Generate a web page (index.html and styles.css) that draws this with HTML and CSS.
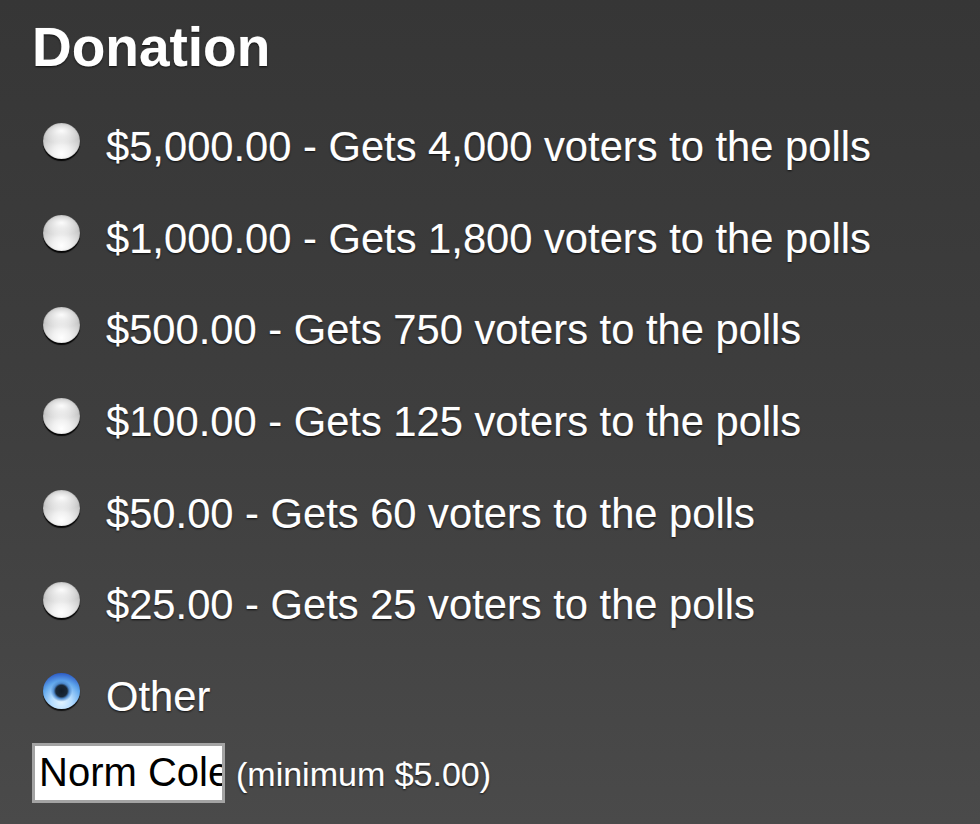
FILE: index.html
```html
<!DOCTYPE html>
<html>
<head>
<meta charset="utf-8">
<link rel="stylesheet" href="styles.css">
</head>
<body>
<form class="donation">
  <h2 class="title">Donation</h2>
  <label class="option"><input type="radio" name="amt" class="radio"><span class="label">$5,000.00 - Gets 4,000 voters to the polls</span></label>
  <label class="option"><input type="radio" name="amt" class="radio"><span class="label">$1,000.00 - Gets 1,800 voters to the polls</span></label>
  <label class="option"><input type="radio" name="amt" class="radio"><span class="label">$500.00 - Gets 750 voters to the polls</span></label>
  <label class="option"><input type="radio" name="amt" class="radio"><span class="label">$100.00 - Gets 125 voters to the polls</span></label>
  <label class="option"><input type="radio" name="amt" class="radio"><span class="label">$50.00 - Gets 60 voters to the polls</span></label>
  <label class="option"><input type="radio" name="amt" class="radio"><span class="label">$25.00 - Gets 25 voters to the polls</span></label>
  <label class="option"><input type="radio" name="amt" class="radio" checked><span class="label">Other</span></label>
  <div class="other-row">
    <input type="text" class="amount" value="Norm Coleman">
    <span class="hint">(minimum $5.00)</span>
  </div>
</form>
</body>
</html>
```
FILE: styles.css
```css
html, body {
  margin: 0;
  padding: 0;
  height: 100%;
}
body {
  background: linear-gradient(to bottom, #363636 0%, #3e3e3e 50%, #4a4a4a 100%);
  font-family: "Liberation Sans", Arial, sans-serif;
  color: #fff;
  overflow: hidden;
}
.donation {
  padding: 20px 0 0 32px;
  display: flex;
  flex-direction: column;
}
.title {
  margin: 0 0 27px 0;
  font-size: 55px;
  line-height: 54px;
  font-weight: bold;
  text-shadow: 0 1px 2px rgba(0,0,0,0.85), 0 0 1px rgba(255,255,255,0.6);
}
.option {
  height: 91.67px;
  display: flex;
  align-items: center;
  gap: 26px;
}
.label {
  font-size: 41.7px;
  line-height: 91.67px;
  text-shadow: 0 1px 2px rgba(0,0,0,0.85), 0 0 1px rgba(255,255,255,0.6);
}
.radio {
  appearance: none;
  -webkit-appearance: none;
  margin: 0 0 11px 11px;
  width: 37px;
  height: 36px;
  border-radius: 50%;
  flex: none;
  background:
    radial-gradient(ellipse 60% 35% at 50% 22%, rgba(255,255,255,0.95) 0%, rgba(255,255,255,0) 100%),
    radial-gradient(circle at 50% 85%, #ffffff 0%, #f0f0f0 25%, #c9c9c9 60%, #9f9f9f 100%);
  box-shadow: 0 2px 1px rgba(0,0,0,0.9), inset 0 0 1px rgba(0,0,0,0.5);
}
.radio:checked {
  background:
    radial-gradient(circle at 50% 50%, #121c28 0%, #1a2838 22%, rgba(70,130,200,0.9) 30%, rgba(0,0,0,0) 42%),
    radial-gradient(circle at 50% 80%, #e4f5ff 0%, #b4dcff 30%, #5fa6ec 60%, #2b59c4 85%, #1c2f8f 100%);
  box-shadow: 0 2px 1px rgba(0,0,0,0.75);
}
.other-row {
  display: flex;
  align-items: baseline;
  gap: 11px;
}
.amount {
  box-sizing: border-box;
  width: 193px;
  height: 60px;
  margin: 0;
  padding: 0 0 0 4px;
  border: 3px solid #a3a3a3;
  background: #fff;
  color: #000;
  font-family: "Liberation Sans", Arial, sans-serif;
  font-size: 40px;
  outline: none;
}
.hint {
  font-size: 34px;
  text-shadow: 0 1px 2px rgba(0,0,0,0.85), 0 0 1px rgba(255,255,255,0.6);
}
```
